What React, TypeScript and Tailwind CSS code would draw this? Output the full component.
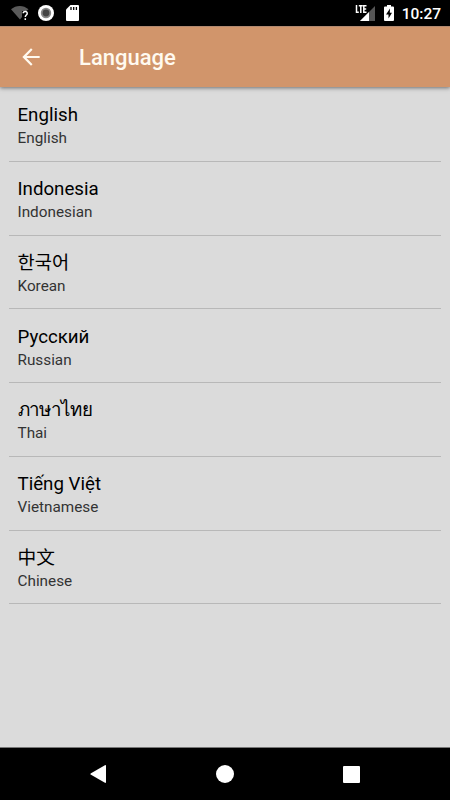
import { useState } from "react";

interface Language {
    code: string,
    nativeName: string,
    name: string
}

const languages: Language[] = [
    { code: "en", nativeName: "English", name: "English" },
    { code: "id", nativeName: "Indonesia", name: "Indonesian" },
    { code: "ko", nativeName: "한국어", name: "Korean" },
    { code: "ru", nativeName: "Русский", name: "Russian" },
    { code: "th", nativeName: "ภาษาไทย", name: "Thai" },
    { code: "vi", nativeName: "Tiếng Việt", name: "Vietnamese" },
    { code: "zh", nativeName: "中文", name: "Chinese" }
];

const StatusBar: React.FC = (): React.ReactElement => {
    return (
        <div className="flex h-[26px] shrink-0 items-center bg-black pl-[11px] pr-[9px] text-white">
            <svg width="18" height="16" viewBox="0 0 18 16">
                <path d="M0 4.300C5-.200 12.500-.200 17.500 4.300L15.500 6H11v6l-2 2.500z" fill="#5a5a5a" />
                <path d="M12.200 8.300C12.300 5.800 16.500 5.900 16.200 8.600 16 10 14.300 10.200 14.300 12M14.300 13.300v1.700" fill="none" stroke="#fff" strokeWidth="1.500" />
            </svg>
            <svg className="ml-[9px]" width="16" height="16" viewBox="0 0 16 16">
                <circle cx="8" cy="8" r="8" fill="#fff" />
                <circle cx="8" cy="8" r="4.300" fill="#444" stroke="#888" strokeWidth="1.800" />
            </svg>
            <svg className="ml-3" width="13" height="16" viewBox="0 0 13 16">
                <path d="M4.500 0H12a1 1 0 0 1 1 1v14a1 1 0 0 1-1 1H1a1 1 0 0 1-1-1V4.500z" fill="#fff" />
                <path d="M5 2v3M7.700 2v3M10.400 2v3" stroke="#000" strokeWidth="1.300" />
            </svg>
            <svg className="ml-auto" width="20" height="18" viewBox="0 0 20 18">
                <path d="M20 2v15H5z" fill="#555" />
                <path d="M14 8v9H5z" fill="#fff" />
                <path d="M0 0h12v9H0z" fill="#000" />
                <path d="M1.500 1v7.300h2.300M3.800 1.700h4M5.800 1.700V9M11.500 1.700H8.800v6.600h2.700M9 5h2.200" fill="none" stroke="#fff" strokeWidth="1.500" />
            </svg>
            <svg className="ml-[9px]" width="10" height="16" viewBox="0 0 10 16">
                <path d="M3 0h4v1.500h2a1 1 0 0 1 1 1V15a1 1 0 0 1-1 1H1a1 1 0 0 1-1-1V2.500a1 1 0 0 1 1-1h2z" fill="#fff" />
                <path d="M6 3.500 2 9.500h2.500v4L8 7.800H5.800z" fill="#000" />
            </svg>
            <span className="ml-2 pt-[3px] text-[15.5px] leading-none font-medium">10:27</span>
        </div>
    );
}

const Toolbar: React.FC = (): React.ReactElement => {
    return (
        <header className="z-10 flex h-[61px] shrink-0 items-center border-t border-[#b18970] bg-[#d1956b] pl-[18px] text-[#fffaf0] shadow-[0_1px_4px_rgba(0,0,0,0.5)]">
            <button aria-label="Back" className="flex size-[26px] items-center justify-center">
                <svg width="26" height="26" viewBox="0 0 24 24" fill="currentColor">
                    <path d="M20 11H7.830l5.590-5.590L12 4l-8 8 8 8 1.410-1.410L7.830 13H20z" />
                </svg>
            </button>
            <h1 className="ml-[35px] pt-px text-[22px] leading-none font-medium">Language</h1>
        </header>
    );
}

const NavigationBar: React.FC = (): React.ReactElement => {
    return (
        <nav className="flex h-[53px] shrink-0 items-center justify-between border-t border-[#777] bg-black px-[90px] text-white">
            <svg width="16" height="18" viewBox="0 0 16 18" fill="currentColor">
                <path d="M14.500.400Q16-.400 16 1v16q0 1.400-1.500.600L1 9.800q-1.300-.800 0-1.600z" />
            </svg>
            <svg width="18" height="18" viewBox="0 0 18 18" fill="currentColor">
                <circle cx="9" cy="9" r="9" />
            </svg>
            <svg width="17" height="17" viewBox="0 0 17 17" fill="currentColor">
                <rect width="17" height="17" rx="1" />
            </svg>
        </nav>
    );
}

const App: React.FC = (): React.ReactElement => {

    const [selected, setSelected] = useState<string>("en");

    return (
        <div className="flex h-screen flex-col bg-[#dbdbdb] font-[Roboto,'Noto_Sans_CJK_KR','Noto_Sans',sans-serif]">
            <StatusBar />
            <Toolbar />
            <ul className="flex-1 px-[9px] pt-[1.1px]">
                {
                    languages.map(language => {
                        return <li key={language.code} className="h-[73.74px] border-b border-[#b8b8b8]">
                            <button
                                lang={language.code}
                                aria-pressed={selected === language.code}
                                className="flex h-full w-full flex-col justify-start pt-[15.25px] pl-[8.5px] text-left"
                                onClick={() => setSelected(language.code)}
                            >
                                <span className={`block h-6 text-[18.7px] leading-6 text-black ${language.code === "th" ? "tracking-[-0.1px]" : ""}`}>{language.nativeName}</span>
                                <span className="block h-[22px] text-[15.3px] leading-[22px] text-[#333]">{language.name}</span>
                            </button>
                        </li>
                    })
                }
            </ul>
            <NavigationBar />
        </div>
    );
}

export default App;
